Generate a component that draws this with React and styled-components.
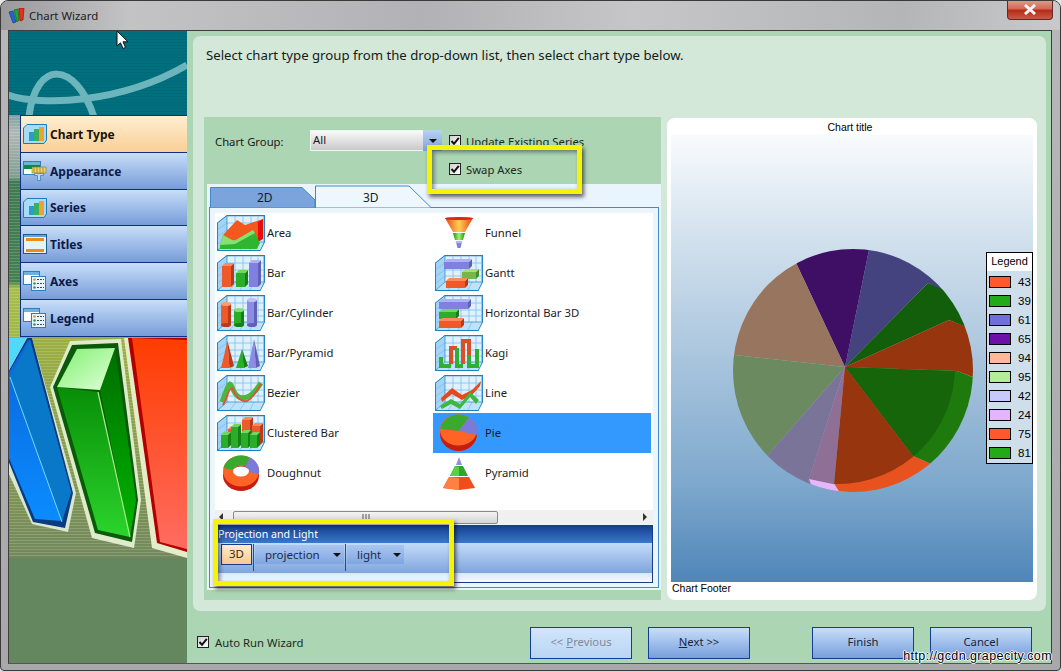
import React from 'react';
import styled, { createGlobalStyle } from 'styled-components';

const FONT = '"Noto Sans", "Open Sans", "Liberation Sans", sans-serif';
const ARIAL = '"Liberation Sans", Arial, sans-serif';

const Global = createGlobalStyle`
  html, body { margin: 0; padding: 0; background: #e8e8e8; overflow: hidden; }
  * { box-sizing: border-box; }
`;

const Win = styled.div`
  position: relative; width: 1061px; height: 671px; display: flex; flex-direction: column;
  font-family: ${FONT}; font-size: 11.3px; color: #1a1a1a; overflow: hidden;
  background: linear-gradient(180deg, #b8b8bb, #a8a8ab);
  border-radius: 8px 8px 4px 4px; border: 1px solid #3a3a3a;
`;
const TitleBar = styled.div`
  height: 29px; flex: none; display: flex; align-items: center; padding: 0 0 0 7px; gap: 4px;
  background: linear-gradient(90deg, #9a9a9c 0, #c3c3c6 12%, #b2b2b6 40%, #c6c6c8 60%, #b4b5b7 85%, #c9c9cb 100%);
`;
const TitleText = styled.span`
  font-size: 11.4px; color: #1c1c1c; flex: 1; margin-top: -1px;
`;
const CloseBtn = styled.div`
  width: 46px; height: 20px; align-self: flex-start; margin: -1px 7px 0 0; border: 1px solid #5c2a28;
  border-top: none; border-radius: 0 0 4px 4px; display: flex; align-items: center; justify-content: center;
  background: linear-gradient(180deg, #e0a090 0, #d26a58 45%, #b82c18 55%, #c85a44 100%);
`;
const Client = styled.div`
  flex: 1; display: flex; margin: 0 8px 6px 7px; border: 1px solid #3e3e3e; border-bottom-color: #555; min-height: 0;
`;
const Sidebar = styled.div`
  position: relative; width: 178px; flex: none; background: #64875f; overflow: hidden;
`;
const SideArt = styled.svg`
  position: absolute; left: 0; top: 0; width: 178px; height: 633px;
`;
const Nav = styled.div`
  position: relative; margin: 84px 0 0 11px; border-left: 1px solid #0f2f80; 
  display: flex; flex-direction: column;
`;
const NavItem = styled.div`
  height: ${p => p.$h}px; display: flex; align-items: center; gap: 3px; padding-left: 2px;
  border-bottom: 1px solid #0f2f80; border-top: ${p => (p.$active ? '1px solid #0f2f80' : 'none')};
  font-weight: 700; font-size: 12px; color: ${p => (p.$active ? '#1a1206' : '#0a1a48')};
  background: ${p => (p.$active ? 'linear-gradient(180deg, #ffeed2, #f9cf95)' : 'linear-gradient(180deg, #c8def9, #779cd8)')};
`;
const Main = styled.div`
  flex: 1; background: #acd5b3; padding: 5px 5px 0 6px; display: flex; flex-direction: column; min-width: 0;
`;
const Panel = styled.div`
  height: 575px; flex: none; background: #d3e8d8; border-radius: 7px; padding: 0 9px 0 11px; display: flex; flex-direction: column;
`;
const Intro = styled.div`
  height: 81px; flex: none; padding: 9px 0 0 2px; font-size: 13.2px; color: #14201a; line-height: 20px;
`;
const Columns = styled.div`
  display: flex; gap: 6px; align-items: flex-start;
`;
const LeftPane = styled.div`
  position: relative; width: 457px; height: 483px; flex: none; background: #acd5b3; padding: 13px 0 0 3px;
`;
const GroupRow = styled.div`
  height: 54px; display: flex; align-items: flex-start; padding-left: 8px;
`;
const GroupLabel = styled.span`
  width: 95px; line-height: 23px;
`;
const Combo = styled.div`
  width: 132px; height: 21px; display: flex; border: 1px solid #eef6f2; margin-right: 7px;
  background: linear-gradient(180deg, #fafafa, #c9c9c9); line-height: 18px; padding-left: 2px;
  justify-content: space-between;
`;
const ComboArrow = styled.div`
  width: 19px; margin: -1px -1px -1px 0; background: linear-gradient(180deg, #b9d2f3, #7aa4da); display: flex; align-items: center; justify-content: center;
`;
const Checks = styled.div`
  display: flex; flex-direction: column; gap: 12px; padding-top: 3px;
`;
const CheckRow = styled.label`
  display: flex; align-items: center; gap: 5px; height: 16px; color: #1c2a20;
`;
const CheckBox = styled.span`
  width: 12px; height: 12px; flex: none; border: 1px solid #222; background: linear-gradient(135deg, #cfcfcf, #fff);
  display: flex; align-items: center; justify-content: center;
`;
const Frame = styled.div`
  width: 454px; height: 406px; background: #e9f4fc; padding: 1px 2px 2px 2px; display: flex; flex-direction: column;
`;
const TabStrip = styled.div`
  height: 23px; flex: none; display: flex; position: relative; z-index: 1; margin-bottom: -1px;
`;
const Tab = styled.div`
  position: relative; width: ${p => p.$w}px; margin-left: ${p => p.$ml}px; display: flex; align-items: center;
  padding-left: ${p => p.$pl}px; height: 23px; font-size: 12px;
`;
const TabShape = styled.svg`
  position: absolute; left: 0; top: 0; width: 100%; height: 100%;
`;
const TabLabel = styled.span`
  position: relative; margin-top: 1px;
`;
const Body = styled.div`
  flex: 1; border: 1px solid #3d8cc8; padding: 5px 5px 4px 5px; display: flex; flex-direction: column; background: #eaf5fc;
`;
const List = styled.div`
  background: #fff; height: 311px; flex: none; display: flex; flex-direction: column;
`;
const Grid = styled.div`
  display: grid; grid-template-columns: 218px 218px; grid-auto-rows: 40px; height: 297px;
`;
const Item = styled.div`
  display: flex; align-items: center; gap: 2px; padding-left: 2px;
  background: ${p => (p.$sel ? '#3399ff' : 'transparent')}; color: #1c1c1c;
`;
const ItemLabel = styled.span`
  margin-top: -2px;
`;
const ScrollBar = styled.div`
  height: 14px; flex: none; background: #f0f0f0; display: flex; align-items: center; padding: 0 6px 0 4px;
`;
const ScrollThumb = styled.div`
  width: 265px; height: 13px; margin-left: 10px; border: 1px solid #8a8a8a; border-radius: 2px;
  background: linear-gradient(180deg, #f4f4f4, #d4d4d4); display: flex; align-items: center; justify-content: center;
`;
const ScrollSpace = styled.div`
  flex: 1;
`;
const Tri = styled.span`
  width: 0; height: 0; border-style: solid; display: inline-block;
  border-width: ${p => (p.$dir === 'down' ? '4px 4px 0 4px' : p.$dir === 'left' ? '4px 4px 4px 0' : '4px 0 4px 4px')};
  border-color: ${p => (p.$dir === 'down' ? '#111 transparent transparent transparent' : p.$dir === 'left' ? 'transparent #333 transparent transparent' : 'transparent transparent transparent #333')};
`;
const ProjPanel = styled.div`
  width: 439px; height: 58px; flex: none; margin: 1px 0 0 -1px; border: 1px solid #1a3a8a; display: flex; flex-direction: column;
`;
const ProjHead = styled.div`
  height: 17px; flex: none; background: linear-gradient(180deg, #16408f, #3a78cc); color: #fff; padding-left: 3px;
  font-size: 10.6px; line-height: 17px;
`;
const ToolBar = styled.div`
  height: 30px; flex: none; background: linear-gradient(180deg, #c4dcf9, #7fa5dd); display: flex; padding: 1px 0 0 6px; font-size: 11.5px; color: #1a2a50;
`;
const ToolToggle = styled.div`
  width: 31px; height: 21px; border: 1px solid #1a3a8a; background: linear-gradient(180deg, #ffeccf, #f8c98f); text-align: center; line-height: 18px; color: #3a2a10;
`;
const ToolSep = styled.div`
  width: 1px; height: 27px; background: #2c4a86; margin: 0 1px;
`;
const ToolDrop = styled.div`
  width: ${p => p.$w}px; height: 19px; margin: 1px 0 0 0; padding: 0 3px 0 10px; display: flex; align-items: center; justify-content: space-between;
  background: linear-gradient(180deg, #a9c6f0, #80a6e0);
`;
const ProjFoot = styled.div`
  flex: 1; background: linear-gradient(180deg, #d8e8fa, #f5fafe);
`;
const ChartCard = styled.div`
  position: relative; width: 370px; height: 482px; flex: none; margin-top: 1px; background: #fff; border-radius: 8px; padding: 0 4px;
  display: flex; flex-direction: column; font-family: ${ARIAL}; font-size: 10.5px; color: #000;
`;
const ChartTitle = styled.div`
  height: 17px; flex: none; text-align: center; line-height: 19px; padding-right: 4px;
`;
const Plot = styled.div`
  flex: 1; min-height: 0; background: linear-gradient(180deg, #f8fbfd 0, #d4e2ee 22%, #7ea8cd 78%, #4f86b8 100%);
`;
const PlotSvg = styled.svg`
  display: block; width: 362px; height: 447px;
`;
const ChartFooter = styled.div`
  height: 18px; flex: none; line-height: 13px;
  padding-left: 1px;
`;
const Legend = styled.div`
  position: absolute; left: 319px; top: 134px; width: 47px; height: 212px; border: 1px solid #000;
  background: #cfdeeb; display: flex; flex-direction: column;
`;
const LegendHead = styled.div`
  height: 18px; flex: none; background: #fff; text-align: center; line-height: 17px; font-size: 11px;
`;
const LegendRow = styled.div`
  height: 19px; flex: none; display: flex; align-items: center; padding-left: 2px; gap: 7px; font-size: 11.5px; margin-top: ${p => (p.$first ? '1px' : 0)};
`;
const Swatch = styled.span`
  width: 22px; height: 12px; border: 1px solid #000; background: ${p => p.$c};
`;
const Footer = styled.div`
  flex: 1; display: flex; align-items: flex-start; padding: 16px 0 0 4px; position: relative;
`;
const AutoRun = styled(CheckRow)`
  margin-top: 7px; width: 333px; gap: 6px;
`;
const WizBtn = styled.div`
  width: 102px; height: 32px; flex: none; margin-left: ${p => p.$ml}px; border: 1px solid #123f92; display: flex; align-items: center; justify-content: center;
  padding-bottom: 3px; color: ${p => (p.$off ? '#7f8a98' : '#1a2540')};
  background: ${p => (p.$off ? 'linear-gradient(180deg, #d2e5fa, #b9d5f5)' : 'linear-gradient(180deg, #c8def9, #779fdc)')};
`;
const Mn = styled.span`
  text-decoration: underline;
`;
const Highlight = styled.div`
  position: absolute; left: ${p => p.$x}px; top: ${p => p.$y}px; width: ${p => p.$w}px; height: ${p => p.$h}px;
  border: 5px solid #f4f404; box-shadow: 2px 3px 4px rgba(0,0,0,.6), inset 2px 2px 4px rgba(0,0,30,.45); pointer-events: none;
`;
const Cursor = styled.svg`
  position: absolute; left: 115px; top: 29px; width: 14px; height: 20px;
`;
const Watermark = styled.div`
  position: absolute; right: 8px; bottom: 7px; font-family: ${ARIAL}; font-size: 12.5px; color: #000; letter-spacing: .4px;
  text-shadow: 1px 0 0 #fff, -1px 0 0 #fff, 0 1px 0 #fff, 0 -1px 0 #fff;
`;

/* ---------- drawings ---------- */
const Check = () => (
  <svg width="10" height="10" viewBox="0 0 10 10"><path d="M1.5 5 L4 7.8 L8.8 1.8" fill="none" stroke="#111" strokeWidth="2" /></svg>
);

const Bar3 = ({ x, y, w, h, d = 3, f, s, t }) => (
  <g>
    <rect x={x} y={y} width={w} height={h} fill={f} />
    <polygon points={`${x + w},${y} ${x + w + d},${y - d} ${x + w + d},${y + h - d} ${x + w},${y + h}`} fill={s} />
    <polygon points={`${x},${y} ${x + d},${y - d} ${x + w + d},${y - d} ${x + w},${y}`} fill={t} />
  </g>
);
const RED = { f: '#f05a28', s: '#b83a18', t: '#ff8a60' };
const GRN = { f: '#2aae2a', s: '#168016', t: '#70d860' };
const PUR = { f: '#8080e0', s: '#6060b8', t: '#b0b0f4' };

const Wall = ({ children }) => (
  <svg width="48" height="36" viewBox="0 0 48 36" style={{ flex: 'none' }}>
    <path d="M.7 8 L10 .7 H47.3 V27 L43 35.3 H.7Z" fill="#e0f0fc" stroke="#1a80c4" strokeWidth="1.3" />
    <path d="M1 8 L10 1 V27 L1 35Z" fill="#a4d4f5" />
    <path d="M1 35 L10 27 H47 L43 35Z" fill="#c0e2f9" />
    <path d="M10 8 H47 M10 15 H47 M10 21 H47 M18 1 V27 M26 1 V27 M34 1 V27 M41 1 V27 M1 14 L10 8 M1 21 L10 15 M1 28 L10 21 M19 27 L13 35 M28 27 L23 35 M37 27 L33 35" stroke="#7cc0ee" strokeWidth=".8" fill="none" />
    <path d="M10 .5 V27 H47.5 M10 27 L1 35" stroke="#1f86c6" strokeWidth=".7" fill="none" />
    {children}
  </svg>
);

const IArea = () => (
  <Wall>
    <polygon points="6,20 20,5 28,10 46,4 46,24 6,26" fill="#f4581f" />
    <polygon points="41,7 46,4 46,24 41,27" fill="#e80e0e" />
    <polygon points="3,30 6,20 17,26 36,15 43,28 40,34 3,34" fill="#2fb52f" />
    <polygon points="3,30 6,20 17,26 36,15 38,18 18,29" fill="#88e070" />
  </Wall>
);
const IBar = () => (
  <Wall>
    <Bar3 x={5} y={11} w={9} h={21} {...RED} />
    <Bar3 x={19} y={18} w={9} h={14} {...GRN} />
    <Bar3 x={32} y={8} w={9} h={24} {...PUR} />
  </Wall>
);
const Cyl = ({ x, y, h, c, d, l }) => (
  <g>
    <rect x={x} y={y} width="10" height={h} fill={c} />
    <rect x={x + 7} y={y} width="3" height={h} fill={d} />
    <ellipse cx={x + 5} cy={y + h} rx="5" ry="2" fill={d} />
    <ellipse cx={x + 5} cy={y} rx="5" ry="2" fill={l} />
  </g>
);
const ICyl = () => (
  <Wall>
    <Cyl x={4} y={9} h={21} c="#f05a28" d="#b83a18" l="#ff9a70" />
    <Cyl x={17} y={15} h={15} c="#2aae2a" d="#168016" l="#80e070" />
    <Cyl x={30} y={5} h={25} c="#8c8ce4" d="#6060b8" l="#c0c0f8" />
  </Wall>
);
const Pyr = ({ x, b, w, h, c, d }) => (
  <g>
    <polygon points={`${x + w / 2},${b - h} ${x},${b} ${x + w * 0.65},${b}`} fill={c} />
    <polygon points={`${x + w / 2},${b - h} ${x + w * 0.65},${b} ${x + w},${b - 2}`} fill={d} />
  </g>
);
const IPyr = () => (
  <Wall>
    <Pyr x={4} b={33} w={13} h={27} c="#f05a28" d="#b83a18" />
    <Pyr x={19} b={33} w={12} h={19} c="#2aae2a" d="#168016" />
    <Pyr x={31} b={33} w={12} h={29} c="#8c8ce4" d="#6060b8" />
  </Wall>
);
const IBez = () => (
  <Wall>
    <path d="M5 27 C9 16 11 10 13 9 C16 10 15 18 22 22 C30 25 36 20 44 8" fill="none" stroke="#4ab83c" strokeWidth="5" />
    <path d="M6 30 C11 22 11 14 15 13 C18 18 20 27 30 26 C36 23 40 16 44 9" fill="none" stroke="#e0503a" strokeWidth="1.8" />
  </Wall>
);
const IClus = () => (
  <Wall>
    <Bar3 x={11} y={14} w={8} h={16} {...RED} />
    <Bar3 x={25} y={5} w={8} h={25} {...RED} />
    <Bar3 x={35} y={11} w={8} h={19} {...RED} />
    <Bar3 x={4} y={20} w={7} h={13} {...GRN} />
    <Bar3 x={14} y={12} w={7} h={21} {...GRN} />
    <Bar3 x={24} y={18} w={7} h={15} {...GRN} />
    <Bar3 x={33} y={20} w={7} h={13} {...GRN} />
  </Wall>
);
const IGantt = () => (
  <Wall>
    <Bar3 x={9} y={7} w={25} h={7} {...PUR} />
    <Bar3 x={27} y={17} w={14} h={7} f="#74b848" s="#4e8a30" t="#a8dc80" />
    <Bar3 x={11} y={26} w={19} h={7} {...RED} />
  </Wall>
);
const IHBar = () => (
  <Wall>
    <Bar3 x={4} y={7} w={29} h={7} {...PUR} />
    <Bar3 x={4} y={17} w={17} h={7} {...GRN} />
    <Bar3 x={4} y={26} w={22} h={7} {...RED} />
  </Wall>
);
const IKagi = () => (
  <Wall>
    <path d="M16 29 V13 H22 M28 29 V6 H34 V20" fill="none" stroke="#d8502a" strokeWidth="4" />
    <path d="M6 22 V31 H16 M22 13 V31 H28 M34 20 V31 H42 V14" fill="none" stroke="#30b030" strokeWidth="4" />
  </Wall>
);
const ILine = () => (
  <Wall>
    <polygon points="6,23 17,13 27,20 37,15 46,6 45,11 37,20 27,25 17,19 7,27" fill="#e8481c" />
    <polygon points="5,31 16,24 25,29 35,17 44,25 41,29 35,22 25,34 16,29 7,34" fill="#3cb83c" />
  </Wall>
);
const Plain = ({ children }) => (
  <svg width="48" height="36" viewBox="0 0 48 36" style={{ flex: 'none' }}>
    <defs>
      <linearGradient id="fun" x1="0" x2="1" y1="0" y2="0">
        <stop offset="0" stopColor="#e8401c" /><stop offset=".5" stopColor="#ffd050" /><stop offset="1" stopColor="#e8401c" />
      </linearGradient>
      <linearGradient id="fung" x1="0" x2="1" y1="0" y2="0">
        <stop offset="0" stopColor="#189018" /><stop offset=".5" stopColor="#a8f070" /><stop offset="1" stopColor="#189018" />
      </linearGradient>
    </defs>
    {children}
  </svg>
);
const IFunnel = () => (
  <Plain>
    <polygon points="10,3 38,3 30,17 18,17" fill="url(#fun)" />
    <ellipse cx="24" cy="3.5" rx="14" ry="1.6" fill="#d82c10" />
    <polygon points="18,18 30,18 28,25 20,25" fill="url(#fung)" />
    <polygon points="21,27 27,27 25.5,33 22.5,33" fill="#8080d8" />
    <ellipse cx="24" cy="27" rx="3.5" ry="1.2" fill="#b8b8f0" />
  </Plain>
);
const IDough = () => (
  <Plain>
    <ellipse cx="24" cy="20.5" rx="18" ry="15.5" fill="#c81c10" />
    <ellipse cx="24" cy="16" rx="18" ry="15.5" fill="#ff6426" />
    <path d="M6.5 13 A18 15.5 0 0 1 33 2.5 L28 12 A8 5.5 0 0 0 16 15Z" fill="#3aaa2e" />
    <path d="M33 2.5 A18 15.5 0 0 1 41.8 19 L31.8 17 A8 5.5 0 0 0 28 12Z" fill="#7a7ad8" />
    <ellipse cx="24" cy="16" rx="8" ry="5.5" fill="#fff" />
    <path d="M16 16 A8 5.5 0 0 1 32 16 A8 4.5 0 0 0 16 16Z" fill="#a82010" />
  </Plain>
);
const IPie = () => (
  <svg width="48" height="38" viewBox="0 0 48 38" style={{ flex: 'none' }}>
    <ellipse cx="23.5" cy="20" rx="18.5" ry="17" fill="#c81c10" />
    <ellipse cx="23.5" cy="16" rx="18.5" ry="15.5" fill="#ff6426" />
    <path d="M23.5 17 L5.3 15 A18.5 15.5 0 0 1 34 3.2Z" fill="#3aaa2e" />
    <path d="M23.5 17 L34 3.2 A18.5 15.5 0 0 1 41.7 21Z" fill="#7a7ad8" />
  </svg>
);
const IPyramid = () => (
  <Plain>
    <polygon points="24,2 21,10 27,10" fill="#9090e0" />
    <polygon points="20,11 28,11 33,21 15,21" fill="#2aa82a" />
    <polygon points="20,11 24,12 24,21 15,21" fill="#58d048" />
    <polygon points="14,22 34,22 40,33 24,35 8,33" fill="#f04c1c" />
    <polygon points="14,22 24,23 24,35 8,33" fill="#ff8040" />
  </Plain>
);

const NavFrame = ({ children }) => (
  <svg width="24" height="20" viewBox="0 0 24 20" style={{ flex: 'none' }}>{children}</svg>
);
const IconType = () => (
  <NavFrame>
    <path d="M.5 4 L4 .5 H23.5 V16 L21 19.5 H.5Z" fill="#a8dcf6" stroke="#1c7cb8" />
    <rect x="6" y="8" width="5" height="9" fill="#2a9ad0" />
    <rect x="11" y="5" width="5" height="12" fill="#38b060" />
    <rect x="16" y="3" width="5" height="14" fill="#f0a030" />
  </NavFrame>
);
const IconBrush = () => (
  <NavFrame>
    <rect x="0.5" y=".5" width="17" height="13" fill="#fff" stroke="#2c7fb8" />
    <rect x="1" y="1" width="16" height="3" fill="#6fb1dc" />
    <rect x="1" y="4" width="16" height="4" fill="#0c8a3c" />
    <rect x="9" y="6" width="14" height="6" fill="#f0d060" stroke="#8a7a20" strokeWidth=".6" />
    <path d="M11 6v6M14 6v6M17 6v6M20 6v6" stroke="#8a7a20" strokeWidth=".7" />
    <path d="M11.5 12.5 h9 v2 h-3 v5 h-3 v-5 h-3z" fill="#b8daf2" stroke="#2c7fb8" strokeWidth=".7" />
  </NavFrame>
);
const IconTitles = () => (
  <NavFrame>
    <rect x=".5" y=".5" width="23" height="19" fill="#e8f2fa" stroke="#1c5a90" />
    <rect x="1" y="1" width="22" height="2" fill="#5aa8d8" />
    <rect x="3" y="4" width="18" height="3" fill="#f08c14" />
    <rect x="3" y="15" width="18" height="3" fill="#f08c14" />
  </NavFrame>
);
const IconList = () => (
  <NavFrame>
    <rect x=".5" y=".5" width="16" height="13" fill="#fff" stroke="#2c7fb8" />
    <rect x="1" y="1" width="15" height="3" fill="#6fb1dc" />
    <rect x="8.5" y="5.5" width="14" height="14" fill="#e8f4fb" stroke="#2c7fb8" />
    <path d="M14 8.5h7M14 12.5h7M14 16.5h7" stroke="#445" strokeDasharray="2 1" />
    <circle cx="11.5" cy="8.5" r="1.3" fill="#d8a030" /><circle cx="11.5" cy="12.5" r="1.3" fill="#3a9a3a" /><circle cx="11.5" cy="16.5" r="1.3" fill="#2a8a9a" />
  </NavFrame>
);

const AppIcon = () => (
  <svg width="17" height="16" viewBox="0 0 17 16" style={{ flex: 'none' }}>
    <polygon points="1,4 5,3 8,14 5,15" fill="#1a6ad8" stroke="#0c3070" strokeWidth=".6" />
    <polygon points="6,2 10,1 11,12 9,14" fill="#20a830" stroke="#0a5010" strokeWidth=".6" />
    <polygon points="11,0 16,0 15,12 12,13" fill="#e83018" stroke="#801008" strokeWidth=".6" />
  </svg>
);

const SideArtwork = () => (
  <SideArt viewBox="9 31 178 633">
    <defs>
      <pattern id="scan" width="2" height="3" patternUnits="userSpaceOnUse">
        <rect width="2" height="1" fill="#fff" opacity=".16" />
      </pattern>
      <pattern id="scanT" width="2" height="3" patternUnits="userSpaceOnUse">
        <rect width="2" height="1" fill="#000" opacity=".06" />
      </pattern>
      <linearGradient id="blueF" x1="0" y1="0" x2="0" y2="1"><stop offset="0" stopColor="#0a64d8" /><stop offset="1" stopColor="#0a8cff" /></linearGradient>
      <linearGradient id="grnL" x1="0" y1="0" x2="0" y2="1"><stop offset="0" stopColor="#078e07" /><stop offset="1" stopColor="#2cd42c" /></linearGradient>
      <linearGradient id="grnR" x1="0" y1="0" x2="0" y2="1"><stop offset="0" stopColor="#006e00" /><stop offset="1" stopColor="#00b400" /></linearGradient>
      <linearGradient id="grnT" x1="0" y1="0" x2="1" y2="1"><stop offset="0" stopColor="#80f070" /><stop offset="1" stopColor="#e0ffd8" /></linearGradient>
      <linearGradient id="redF" x1="0" y1="0" x2="0" y2="1"><stop offset="0" stopColor="#ff3c00" /><stop offset="1" stopColor="#ff6c60" /></linearGradient>
      <linearGradient id="olive" x1="0" y1="0" x2="0" y2="1"><stop offset="0" stopColor="#9cb040" /><stop offset="1" stopColor="#72885c" /></linearGradient>
      <linearGradient id="strip" x1="0" y1="0" x2="0" y2="1">
        <stop offset="0" stopColor="#7aa0a4" /><stop offset=".08" stopColor="#b0b8b4" /><stop offset=".28" stopColor="#7f9e90" />
        <stop offset=".3" stopColor="#3f7a52" /><stop offset=".75" stopColor="#44804e" /><stop offset=".78" stopColor="#a6bc4c" /><stop offset="1" stopColor="#a0b848" />
      </linearGradient>
    </defs>
    <rect x="8" y="30" width="179" height="85" fill="#006f7e" />
    <rect x="8" y="30" width="179" height="85" fill="url(#scanT)" />
    <path d="M8 95 C40 106 120 104 187 65" fill="none" stroke="#6cb5bd" strokeWidth="7" />
    <path d="M29 116 C36 60 75 60 94 117" fill="none" stroke="#6cb5bd" strokeWidth="7" />
    <rect x="8" y="115" width="12" height="222" fill="url(#strip)" />
    <rect x="8" y="115" width="12" height="222" fill="url(#scan)" />
    <rect x="8" y="337" width="179" height="221" fill="url(#olive)" />
    <rect x="8" y="337" width="179" height="221" fill="url(#scan)" />
    {/* blue bar */}
    <polygon points="8,338 32,338 76,493 68,532 32,524 8,472" fill="#d8e8d0" />
    <polygon points="27,338 32,338 73,493 65,528 33,522 8,460 8,372" fill="#0a3a80" />
    <polygon points="28,340 30,340 71,492 62,521 35,519 8,456 8,374" fill="url(#blueF)" />
    <polygon points="30,340 71,492 62,521 10,377" fill="#0a78c8" />
    <polygon points="8,338 27,338 8,372" fill="#50d8ff" />
    <line x1="10" y1="377" x2="62" y2="522" stroke="#78d8ff" strokeWidth="1" />
    {/* green bar */}
    <polygon points="70,341 121,339 141,500 134,548 92,538 50,387" fill="#dfeccc" />
    <polygon points="72,345 118,343 138,500 132,542 95,533 53,387" fill="#0a5a0a" />
    <polygon points="57,387 98,392 130,537 98,530" fill="url(#grnL)" />
    <polygon points="115,348 136,500 130,537 100,390" fill="url(#grnR)" />
    <polygon points="77,349 115,348 100,390 57,387" fill="url(#grnT)" />
    <line x1="98" y1="392" x2="130" y2="537" stroke="#a8f088" strokeWidth="1.2" />
    {/* red bar */}
    <polygon points="124,338 187,338 187,558 152,548" fill="#e4ecc8" />
    <polygon points="128,338 187,338 187,552 157,543" fill="#b00000" />
    <polygon points="132,338 187,340 187,549 160,542" fill="url(#redF)" />
    <rect x="8" y="558" width="179" height="106" fill="#64875f" />
  </SideArt>
);

const W = ([cx, cy]) => `${cx},${cy}`;
const C = [845, 367];
const wedge = (...pts) => [C, ...pts].map(W).join(' ');
const PieChart = () => (
  <PlotSvg viewBox="671 135 362 447">
    <defs>
      <clipPath id="outer"><ellipse cx="853" cy="370.5" rx="120" ry="121.5" /></clipPath>
      <clipPath id="inner"><circle cx="838" cy="367" r="117" /></clipPath>
    </defs>
    <g clipPath="url(#outer)">
      <polygon points={wedge([869, 250], [872, 230], [950, 230], [945, 292], [928, 283])} fill="#44437f" />
      <polygon points={wedge([928, 283], [944, 290], [990, 300], [990, 335], [966, 327], [949, 320])} fill="#125e0a" />
      <polygon points={wedge([949, 320], [967, 327], [1000, 330], [1000, 385], [973, 377], [957, 371])} fill="#97350f" />
      <polygon points={wedge([797, 265], [790, 230], [875, 230], [869, 250])} fill="#3f0f66" />
      <polygon points={wedge([735, 355], [700, 350], [700, 230], [790, 230], [797, 265])} fill="#97755f" />
      <polygon points={wedge([768, 455], [740, 490], [700, 490], [700, 350], [735, 355])} fill="#6b8a5f" />
      <polygon points={wedge([809, 479], [800, 510], [740, 490], [768, 455])} fill="#7b7499" />
      <polygon points={wedge([834, 484], [832, 510], [800, 510], [809, 479])} fill="#8f6f96" />
      <polygon points="809,479 835,484.5 848,492 845,505 815,495" fill="#e4b8f8" />
      <polygon points={wedge([957, 371], [985, 382], [990, 440], [945, 470], [913, 456])} fill="#1e7a0c" />
      <polygon points={wedge([913, 456], [945, 470], [880, 520], [848, 505], [835, 485])} fill="#e8521e" />
      <g clipPath="url(#inner)">
        <polygon points={wedge([957, 371], [985, 382], [990, 440], [945, 480], [913, 456])} fill="#16650a" />
        <polygon points={wedge([913, 456], [945, 490], [880, 520], [834, 510], [834, 484])} fill="#97350f" />
      </g>
    </g>
  </PlotSvg>
);

const LEFT = [
  ['Area', IArea], ['Funnel', IFunnel], ['Bar', IBar], ['Gantt', IGantt],
  ['Bar/Cylinder', ICyl], ['Horizontal Bar 3D', IHBar], ['Bar/Pyramid', IPyr], ['Kagi', IKagi],
  ['Bezier', IBez], ['Line', ILine], ['Clustered Bar', IClus], ['Pie', IPie],
  ['Doughnut', IDough], ['Pyramid', IPyramid],
];
const NAV = [
  ['Chart Type', IconType, 38, true], ['Appearance', IconBrush, 37], ['Series', IconType, 36],
  ['Titles', IconTitles, 37], ['Axes', IconList, 37], ['Legend', IconList, 37],
];
const LEG = [
  ['#ff5a2a', 43], ['#22aa18', 39], ['#7070d8', 61], ['#6c10a8', 65], ['#ffb898', 94],
  ['#b4ec9c', 95], ['#c8c8fc', 42], ['#e4b4fc', 24], ['#ff5a2a', 75], ['#22aa18', 81],
];

export default function App() {
  return (
    <Win>
      <Global />
      <TitleBar>
        <AppIcon />
        <TitleText>Chart Wizard</TitleText>
        <CloseBtn>
          <svg width="16" height="11" viewBox="0 0 16 11"><path d="M3 1 L13 10 M13 1 L3 10" stroke="#f4f4f4" strokeWidth="3" /></svg>
        </CloseBtn>
      </TitleBar>
      <Client>
        <Sidebar>
          <SideArtwork />
          <Nav>
            {NAV.map(([label, Icon, h, active]) => (
              <NavItem key={label} $h={h} $active={active}><Icon />{label}</NavItem>
            ))}
          </Nav>
        </Sidebar>
        <Main>
          <Panel>
            <Intro>Select chart type group from the drop-down list, then select chart type below.</Intro>
            <Columns>
              <LeftPane>
                <GroupRow>
                  <GroupLabel>Chart Group:</GroupLabel>
                  <Combo>All<ComboArrow><Tri $dir="down" /></ComboArrow></Combo>
                  <Checks>
                    <CheckRow><CheckBox><Check /></CheckBox>Update Existing Series</CheckRow>
                    <CheckRow><CheckBox><Check /></CheckBox>Swap Axes</CheckRow>
                  </Checks>
                </GroupRow>
                <Frame>
                  <TabStrip>
                    <Tab $w={105} $ml={1} $pl={47}>
                      <TabShape viewBox="0 0 105 23" preserveAspectRatio="none">
                        <path d="M.5 23 V2.5 H92 L105 15 V23Z" fill="#7ba3dc" stroke="#3d8cc8" />
                      </TabShape>
                      <TabLabel>2D</TabLabel>
                    </Tab>
                    <Tab $w={116} $ml={0} $pl={48}>
                      <TabShape viewBox="0 0 116 23" preserveAspectRatio="none">
                        <path d="M.5 23 V1 H94 L116 22.5 V23Z" fill="#eef7fd" stroke="#3d8cc8" />
                      </TabShape>
                      <TabLabel>3D</TabLabel>
                    </Tab>
                  </TabStrip>
                  <Body>
                    <List>
                      <Grid>
                        {LEFT.map(([label, Icon]) => (
                          <Item key={label} $sel={label === 'Pie'}><Icon /><ItemLabel>{label}</ItemLabel></Item>
                        ))}
                      </Grid>
                      <ScrollBar>
                        <Tri $dir="left" />
                        <ScrollThumb>
                          <svg width="8" height="7" viewBox="0 0 8 7"><path d="M1 0v7M4 0v7M7 0v7" stroke="#555" /></svg>
                        </ScrollThumb>
                        <ScrollSpace />
                        <Tri $dir="right" />
                      </ScrollBar>
                    </List>
                    <ProjPanel>
                      <ProjHead>Projection and Light</ProjHead>
                      <ToolBar>
                        <ToolToggle>3D</ToolToggle>
                        <ToolSep />
                        <ToolDrop $w={89}>projection<Tri $dir="down" /></ToolDrop>
                        <ToolSep />
                        <ToolDrop $w={57}>light<Tri $dir="down" /></ToolDrop>
                      </ToolBar>
                      <ProjFoot />
                    </ProjPanel>
                  </Body>
                </Frame>
                <Highlight $x={223} $y={28} $w={155} $h={49} />
                <Highlight $x={9} $y={402} $w={241} $h={67} />
              </LeftPane>
              <ChartCard>
                <ChartTitle>Chart title</ChartTitle>
                <Plot><PieChart /></Plot>
                <ChartFooter>Chart Footer</ChartFooter>
                <Legend>
                  <LegendHead>Legend</LegendHead>
                  {LEG.map(([c, n], i) => (
                    <LegendRow key={i} $first={i === 0}><Swatch $c={c} />{n}</LegendRow>
                  ))}
                </Legend>
              </ChartCard>
            </Columns>
          </Panel>
          <Footer>
            <AutoRun><CheckBox><Check /></CheckBox>Auto Run Wizard</AutoRun>
            <WizBtn $ml={0} $off>&lt;&lt;&nbsp;<Mn>P</Mn>revious</WizBtn>
            <WizBtn $ml={16}><Mn>N</Mn>ext &gt;&gt;</WizBtn>
            <WizBtn $ml={62}>Finish</WizBtn>
            <WizBtn $ml={16}>Cancel</WizBtn>
          </Footer>
        </Main>
      </Client>
      <Cursor viewBox="0 0 14 20">
        <path d="M1 1 V16 L4.5 12.8 L7 18.5 L9.5 17.4 L7 11.8 H12Z" fill="#fff" stroke="#111" strokeWidth="1" />
      </Cursor>
      <Watermark>http://gcdn.grapecity.com</Watermark>
    </Win>
  );
}
